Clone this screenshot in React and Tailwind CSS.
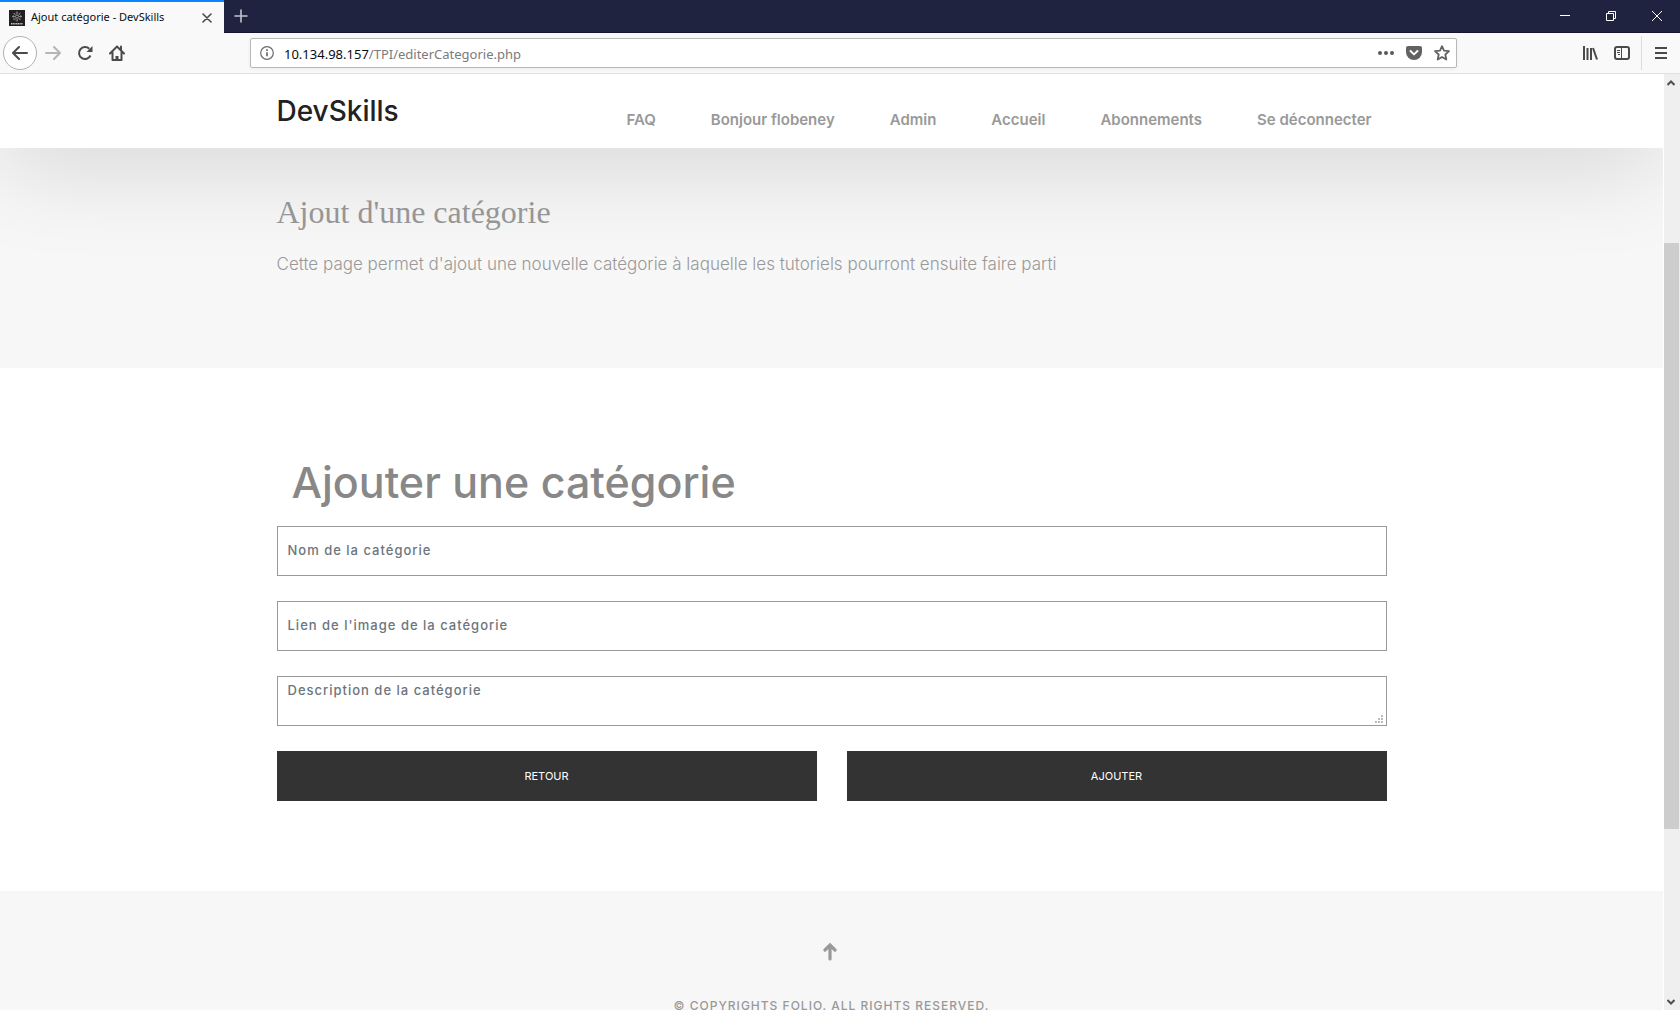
import React from "react";

const sans = "font-['Inter',sans-serif]";

const NAV = ["FAQ", "Bonjour flobeney", "Admin", "Accueil", "Abonnements", "Se déconnecter"];

function IconButton({ label, className = "", children }) {
  return (
    <button type="button" aria-label={label} className={"flex shrink-0 items-center justify-center " + className}>
      {children}
    </button>
  );
}

function Svg({ size = 16, children, ...rest }) {
  return (
    <svg width={size} height={size} viewBox="0 0 16 16" fill="none" stroke="#4a4a4b" strokeWidth="2" strokeLinecap="round" strokeLinejoin="round" {...rest}>
      {children}
    </svg>
  );
}

function TabBar() {
  return (
    <div className="flex h-[33px] shrink-0 border-b border-[#14152c] bg-[#202340]">
      <div className="-mb-px flex w-56 items-center border-t-2 border-[#0a84ff] bg-[#f9f9fa] pl-[9px] pr-2">
        <svg width="16" height="16" viewBox="0 0 16 16" className="shrink-0">
          <rect width="16" height="16" fill="#231f20" />
          <g stroke="#a5a3a4" strokeWidth="0.8" fill="none">
            <circle cx="8" cy="6.5" r="1.5" />
            <path d="M8 1.5v3M8 8.500v3M3 6.500h3M10 6.500h3M4.500 3l2.200 2.200M11.500 3L9.300 5.200M4.500 10l2.200-2.200M11.500 10L9.300 7.800" />
            <circle cx="8" cy="6.500" r="3.800" strokeDasharray="1.200 1.200" />
          </g>
          <path d="M2 13.800h12" stroke="#c9c8c8" strokeWidth="1.600" strokeDasharray="1.200 0.500" />
        </svg>
        <span className="ml-1.5 flex-1 whitespace-nowrap font-['Noto_Sans',sans-serif] text-[11px] text-[#0c0c0d]">Ajout catégorie - DevSkills</span>
        <IconButton label="Fermer l'onglet" className="size-[18px]">
          <Svg size={10} viewBox="0 0 10 10" strokeWidth="1.600"><path d="M1 1l8 8M9 1L1 9" /></Svg>
        </IconButton>
      </div>
      <IconButton label="Nouvel onglet" className="w-[34px]">
        <Svg size={14} viewBox="0 0 14 14" stroke="#c4c4cd" strokeWidth="1.600"><path d="M7 1v12M1 7h12" /></Svg>
      </IconButton>
      <div className="flex-1" />
      <IconButton label="Réduire" className="w-[46px]">
        <svg width="10" height="10" stroke="#fff"><path d="M0 4.500h10" /></svg>
      </IconButton>
      <IconButton label="Restaurer" className="w-[46px]">
        <svg width="10" height="10" stroke="#fff" fill="none"><path d="M.5 2.500h7v7h-7zM2.500 2.500v-2h7v7h-2" /></svg>
      </IconButton>
      <IconButton label="Fermer" className="w-[46px]">
        <svg width="10" height="10" stroke="#fff"><path d="M0 0l10 10M10 0L0 10" /></svg>
      </IconButton>
    </div>
  );
}

function Toolbar() {
  return (
    <div className="flex h-[41px] shrink-0 items-center border-b border-[#e0e0e1] bg-[#f9f9fa] pl-[3px]">
      <IconButton label="Précédent" className="size-[34px] rounded-full border border-[#b1b1b1] bg-white">
        <Svg><path d="M15 8H1.500M7 2L1 8l6 6" /></Svg>
      </IconButton>
      <IconButton label="Suivant" className="w-8">
        <Svg stroke="#b5b5b6"><path d="M1 8h13.500M9 2l6 6-6 6" /></Svg>
      </IconButton>
      <IconButton label="Actualiser" className="w-8">
        <Svg strokeLinecap="butt"><path d="M13.500 10.500A6 6 0 1 1 12.300 3.800" /><path d="M15.500 1v6h-6z" fill="#4a4a4b" stroke="none" /></Svg>
      </IconButton>
      <IconButton label="Accueil" className="w-8">
        <Svg><path d="M1 8.500L8 1.500l7 7M3.500 7.500V15h9V7.500" /><path d="M12 1.500v3" /><path d="M8 15v-4" strokeWidth="3" strokeLinecap="butt" /></Svg>
      </IconButton>
      <div className="mx-[117px] flex h-[30px] flex-1 items-center rounded-[2px] border border-[#b8b8b9] bg-white pl-[9px] shadow-[0_1px_4px_rgba(0,0,0,0.06)]">
        <Svg size={14} viewBox="0 0 14 14" stroke="#6b6b6c" strokeWidth="1.200" className="shrink-0">
          <circle cx="7" cy="7" r="6.300" /><path d="M7 6.300v4" strokeWidth="1.700" strokeLinecap="butt" /><path d="M7 3.200v1.800" strokeWidth="1.700" strokeLinecap="butt" />
        </Svg>
        <div className="relative ml-2.5 flex-1 pt-0.5 font-['Noto_Sans',sans-serif] text-[13px] leading-5">
          <div aria-hidden="true" className="whitespace-nowrap text-[#7b7b7b]"><span className="text-[#0c0c0d]">10.134.98.157</span>/TPI/editerCategorie.php</div>
          <input aria-label="Adresse" type="text" className="absolute inset-0 w-full bg-transparent outline-none" />
        </div>
        <IconButton label="Actions" className="w-7">
          <Svg fill="#5a5a5b" stroke="none"><circle cx="2" cy="8" r="2" /><circle cx="8" cy="8" r="2" /><circle cx="14" cy="8" r="2" /></Svg>
        </IconButton>
        <IconButton label="Pocket" className="w-7">
          <Svg><path d="M2 1h12a2 2 0 0 1 2 2v4a8 8 0 0 1-16 0V3a2 2 0 0 1 2-2z" fill="#626263" stroke="none" /><path d="M4.500 6L8 9.400 11.500 6" stroke="#fff" /></Svg>
        </IconButton>
        <IconButton label="Marque-page" className="w-7">
          <Svg stroke="#626263" strokeWidth="1.800"><path d="M8 1.200l2 4.500 5 .5-3.700 3.300 1 5L8 12l-4.300 2.500 1-5L1 6.200l5-.5z" /></Svg>
        </IconButton>
      </div>
      <IconButton label="Bibliothèque" className="w-8">
        <Svg strokeLinecap="butt"><path d="M2 1v14M5.500 3v12M9 3v12M11 3l4 11.500" /></Svg>
      </IconButton>
      <IconButton label="Panneaux latéraux" className="w-8">
        <Svg><rect x="1" y="2" width="14" height="12" rx="2" /><path d="M7.500 2v12" strokeWidth="1" /><path d="M3 5.500h3M3 7.500h3M4 9.500h2" strokeWidth="1" strokeLinecap="butt" /></Svg>
      </IconButton>
      <div className="ml-[3px] h-[34px] w-px bg-[#dcdcdd]" />
      <IconButton label="Menu" className="w-[38px]">
        <Svg strokeLinecap="butt"><path d="M2 3h12M2 8h12M2 13h12" /></Svg>
      </IconButton>
    </div>
  );
}

function Scrollbar() {
  return (
    <div aria-hidden="true" className="ml-px flex w-4 shrink-0 flex-col bg-[#efefef]">
      <div className="flex h-[17px] items-center justify-center pr-0.5">
        <Svg size={8} viewBox="0 0 8 8" stroke="#505050" strokeLinecap="butt" strokeLinejoin="miter"><path d="M.5 6L4 2.500 7.500 6" /></Svg>
      </div>
      <div className="flex-[152]" />
      <div className="mr-px flex-[586] bg-[#cdcdcd]" />
      <div className="flex-[164]" />
      <div className="flex h-[17px] items-center justify-center pr-0.5">
        <Svg size={8} viewBox="0 0 8 8" stroke="#505050" strokeLinecap="butt" strokeLinejoin="miter"><path d="M.5 2L4 5.500 7.500 2" /></Svg>
      </div>
    </div>
  );
}

const field = "block h-[50px] w-full border border-[#999] bg-white px-2.5 text-[13px] font-medium tracking-[1px] text-[#333] outline-none placeholder:text-[#6c757d] placeholder:opacity-100";
const action = "h-[50px] flex-1 bg-[#333] text-[11px] text-white";

export default function App() {
  return (
    <div className={"flex h-screen flex-col overflow-hidden bg-white text-[#999] " + sans}>
      <TabBar />
      <Toolbar />
      <div className="flex min-h-0 flex-1">
        <div className="flex min-w-0 flex-1 flex-col overflow-hidden">
          <header className="relative z-10 shrink-0 bg-white shadow-[0_10px_100px_rgba(0,0,0,0.17)]">
            <div className="mx-auto flex h-[74px] max-w-[1110px] items-center justify-between pr-[15px]">
              <a href="#" className="text-[28px] font-medium leading-9 text-[#222]">DevSkills</a>
              <nav className="flex gap-[55px] pt-[18px] text-[15px] font-semibold leading-5">
                {NAV.map((t) => <a key={t} href="#" className="whitespace-nowrap">{t}</a>)}
              </nav>
            </div>
          </header>

          <section className="h-[220px] shrink-0 bg-[#f7f7f7] pt-11">
            <div className="mx-auto max-w-[1110px]">
              <h1 className="font-['Liberation_Serif',serif] text-[32px] leading-10">Ajout d'une catégorie</h1>
              <p className="mt-5 text-[17px] font-light leading-6">Cette page permet d'ajout une nouvelle catégorie à laquelle les tutoriels pourront ensuite faire parti</p>
            </div>
          </section>

          <main className="shrink-0 bg-white pb-[90px] pt-[84px]">
            <form className="mx-auto max-w-[1110px]">
              <h2 className="mb-3.5 pl-[15px] text-[43px] font-medium leading-[60px] text-[#888]">Ajouter une catégorie</h2>
              <div className="flex flex-col gap-[25px]">
                <input type="text" aria-label="Nom de la catégorie" placeholder="Nom de la catégorie" className={field + " pb-0.5"} />
                <input type="text" aria-label="Lien de l'image de la catégorie" placeholder="Lien de l'image de la catégorie" className={field + " pb-0.5"} />
                <div className="relative">
                  <textarea aria-label="Description de la catégorie" placeholder="Description de la catégorie" className={field + " resize-none py-1 leading-[18px]"} />
                  <svg aria-hidden="true" width="8" height="8" fill="#bbb" className="absolute bottom-[3px] right-1"><path d="M6 0h2v2H6zM3 3h2v2H3zM6 3h2v2H6zM0 6h2v2H0zM3 6h2v2H3zM6 6h2v2H6z" /></svg>
                </div>
                <div className="flex gap-[30px]">
                  <button type="button" className={action}>RETOUR</button>
                  <button type="submit" className={action}>AJOUTER</button>
                </div>
              </div>
            </form>
          </main>

          <footer className="flex flex-1 shrink-0 flex-col items-center bg-[#f7f7f7] pt-[52px]">
            <a href="#" aria-label="Haut de page" className="pr-1">
              <svg width="14" height="18" viewBox="0 0 14 18" fill="none" stroke="#999" strokeWidth="3.200" strokeLinecap="round"><path d="M7 16V2.500M2 7l5-5 5 5" /></svg>
            </a>
            <p className="mt-9 whitespace-nowrap text-[12px] font-medium leading-[18px] tracking-[1px]">© COPYRIGHTS FOLIO. ALL RIGHTS RESERVED.</p>
          </footer>
        </div>
        <Scrollbar />
      </div>
    </div>
  );
}
